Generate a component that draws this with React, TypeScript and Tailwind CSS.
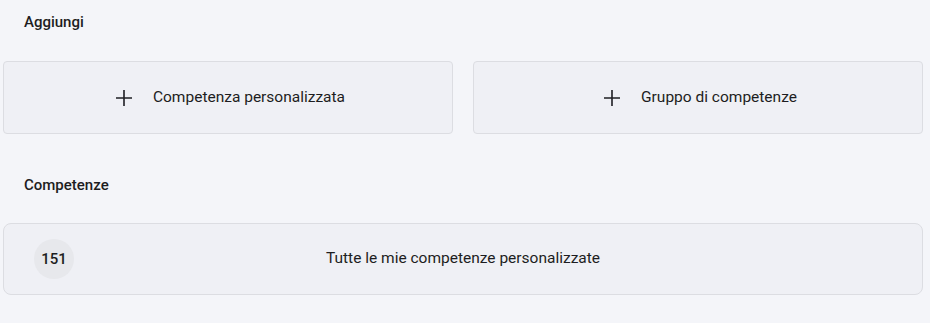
import React from "react";

function PlusIcon() {
  return (
    <svg width="18" height="18" viewBox="0 0 18 18" fill="none" stroke="#1f1f23" strokeWidth="1.6">
      <path d="M9 1v16M1 9h16" />
    </svg>
  );
}

export default function App() {
  return (
    <div
      className="w-[930px] h-[323px] bg-[#f4f5f9] text-[#1d1d21] pl-[3px] pr-[7px] pt-[12px]"
      style={{ fontFamily: "Roboto, 'Noto Sans', sans-serif" }}
    >
      <div className="pl-[21px] text-[15px] leading-[20px] font-medium">Aggiungi</div>
      <div className="mt-[29px] grid grid-cols-2 gap-[20px]">
        <button className="h-[73px] flex items-center justify-center gap-[20px] pl-[4px] rounded-[4px] border border-[#dcdde2] bg-[#eff0f5] text-[15.5px]">
          <PlusIcon />
          <span>Competenza personalizzata</span>
        </button>
        <button className="h-[73px] flex items-center justify-center gap-[20px] pl-[4px] rounded-[4px] border border-[#dcdde2] bg-[#eff0f5] text-[15.5px]">
          <PlusIcon />
          <span>Gruppo di competenze</span>
        </button>
      </div>
      <div className="mt-[41px] pl-[21px] text-[15px] leading-[20px] font-medium">Competenze</div>
      <div className="mt-[28px] relative h-[72px] flex items-center justify-center rounded-[8px] border border-[#dcdde2] bg-[#eff0f5] text-[15.5px]">
        <div className="absolute left-[30px] top-[15px] w-[40px] h-[40px] rounded-full bg-[#e7e8ec] flex items-center justify-center text-[15px] font-medium">
          151
        </div>
        <span>Tutte le mie competenze personalizzate</span>
      </div>
    </div>
  );
}
